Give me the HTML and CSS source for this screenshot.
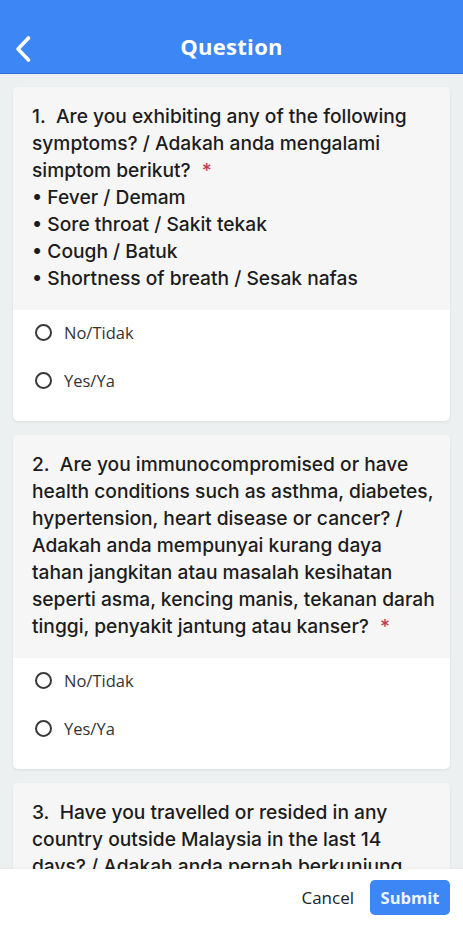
FILE: index.html
```html
<!DOCTYPE html>
<html>
<head>
<meta charset="utf-8">
<link rel="stylesheet" href="styles.css">
</head>
<body>
<div class="app">
  <header class="topbar">
    <svg class="back" width="18" height="28" viewBox="0 0 18 28"><path d="M14.5 3 L4 14 L14.5 25" fill="none" stroke="#fff" stroke-width="3.6" stroke-linecap="round" stroke-linejoin="round"/></svg>
    <h1 class="title">Question</h1>
  </header>
  <main class="content">
    <section class="card">
      <div class="q">1.&nbsp; Are you exhibiting any of the following<br>symptoms? / Adakah anda mengalami<br>simptom berikut? <span class="req">*</span><br>• Fever / Demam<br>• Sore throat / Sakit tekak<br>• Cough / Batuk<br>• Shortness of breath / Sesak nafas</div>
      <div class="opts">
        <div class="opt"><span class="radio"></span><span>No/Tidak</span></div>
        <div class="opt"><span class="radio"></span><span>Yes/Ya</span></div>
      </div>
    </section>
    <section class="card">
      <div class="q">2.&nbsp; Are you immunocompromised or have<br>health conditions such as asthma, diabetes,<br>hypertension, heart disease or cancer? /<br>Adakah anda mempunyai kurang daya<br>tahan jangkitan atau masalah kesihatan<br>seperti asma, kencing manis, tekanan darah<br>tinggi, penyakit jantung atau kanser? <span class="req">*</span></div>
      <div class="opts">
        <div class="opt"><span class="radio"></span><span>No/Tidak</span></div>
        <div class="opt"><span class="radio"></span><span>Yes/Ya</span></div>
      </div>
    </section>
    <section class="card">
      <div class="q">3.&nbsp; Have you travelled or resided in any<br>country outside Malaysia in the last 14<br>days? / Adakah anda pernah berkunjung<br>ke mana-mana negara di luar Malaysia<br>dalam tempoh 14 hari yang lalu? <span class="req">*</span></div>
    </section>
  </main>
  <footer class="footer">
    <button class="btn cancel">Cancel</button>
    <button class="btn submit">Submit</button>
  </footer>
</div>
</body>
</html>
```
FILE: styles.css
```css
html, body {
  margin: 0;
  padding: 0;
  height: 100%;
  overflow: hidden;
}
body {
  font-family: "Open Sans", "Noto Sans", sans-serif;
  background: #edf0f0;
  color: #1c1c1c;
}
.app {
  height: 926px;
  display: flex;
  flex-direction: column;
  position: relative;
}
.topbar {
  height: 73px;
  flex: none;
  background: #3d86f6;
  border-bottom: 1px solid #3272d8;
  display: flex;
  align-items: center;
  justify-content: center;
  position: relative;
}
.back {
  position: absolute;
  left: 14px;
  top: 35px;
}
.title {
  margin: 19px 0 0 0;
  color: #fff;
  font-size: 22px;
  font-weight: 700;
  letter-spacing: 0.3px;
}
.content {
  flex: 1;
  overflow: hidden;
  padding: 13px 13px 0 13px;
  display: flex;
  flex-direction: column;
  gap: 14px;
}
.card {
  background: #fff;
  border-radius: 5px;
  box-shadow: 0 1px 3px rgba(0,0,0,0.08);
  overflow: hidden;
  flex: none;
}
.q {
  background: #f6f6f6;
  padding: 16px 10px 18px 19px;
  font-family: Inter, "Open Sans", sans-serif;
  font-size: 19.2px;
  line-height: 27px;
  font-weight: 500;
  color: #1c1c1c;
  white-space: nowrap;
}
.req {
  color: #c23a4a;
  margin-left: 6px;
}
.opts {
  padding: 0 0 15px 0;
}
.opt {
  height: 48px;
  box-sizing: border-box;
  padding-bottom: 3px;
  display: flex;
  align-items: center;
  padding-left: 22px;
  font-size: 16.5px;
  color: #333;
}
.radio {
  width: 13px;
  height: 13px;
  border: 2.5px solid #3a3a3a;
  border-radius: 50%;
  margin-right: 12px;
  flex: none;
}
.footer {
  position: absolute;
  left: 0;
  right: 0;
  bottom: 0;
  height: 57px;
  background: #fff;
  display: flex;
  align-items: center;
  justify-content: flex-end;
  padding-right: 13px;
  gap: 16px;
  box-shadow: 0 -1px 2px rgba(0,0,0,0.04);
}
.btn {
  font-family: "Open Sans", "Noto Sans", sans-serif;
  font-size: 17px;
  border: none;
  background: none;
  cursor: pointer;
}
.cancel {
  color: #222;
  padding: 0;
}
.submit {
  background: #3d86f6;
  color: #eef4ff;
  font-weight: 700;
  font-size: 16.5px;
  width: 80px;
  height: 35px;
  border-radius: 5px;
  padding: 0;
}
```
